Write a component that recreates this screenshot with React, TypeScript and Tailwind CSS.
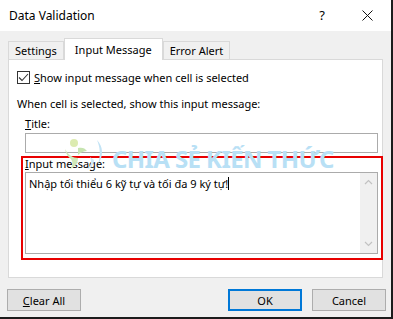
import React from "react";

const font = { fontFamily: '"Noto Sans", "Liberation Sans", sans-serif' };

const Tab = ({ label, active }: { label: string; active?: boolean }) =>
  active ? (
    <div className="relative z-10 -mb-px flex h-[22px] items-center border border-b-0 border-[#d9d9d9] bg-white px-[10px]">
      {label}
    </div>
  ) : (
    <div className="flex h-[18px] items-center border border-b-0 border-[#d9d9d9] bg-[#f0f0f0] px-[6px]">
      {label}
    </div>
  );

const Btn = ({ children, primary }: { children: React.ReactNode; primary?: boolean }) => (
  <div
    className={
      "flex h-[22px] w-[74px] items-center justify-center bg-[#e1e1e1] " +
      (primary ? "border-2 border-[#0078d7]" : "border border-[#adadad]")
    }
  >
    {children}
  </div>
);

const Watermark = () => (
  <div className="pointer-events-none absolute left-[60px] top-[137px] flex items-center gap-[6px]">
    <svg width="46" height="36" viewBox="0 0 46 36">
      <circle cx="14" cy="6" r="4" fill="#dcebb0" />
      <path d="M5 12c3 6 8 9 13 9 0 5-3 9-8 11 3-4 3-7 1-10-3-2-5-5-6-10z" fill="#cfe8b8" />
      <path d="M18 11c4-1 7 0 9 3-3 0-6 1-9 4z" fill="#c6e4b0" />
      <path d="M37 3c6 6 7 16 1 24 3-9 2-17-1-24z" fill="#c2e3f5" />
      <path d="M30 20c2 4 1 9-3 13 4-2 7-6 7-10z" fill="#d0eaf8" />
    </svg>
    <span className="mt-[8px] whitespace-nowrap text-[24px] font-bold leading-none tracking-[-0.6px] text-[#b8e0f5]">
      CHIA SẺ KIẾN THỨC
    </span>
  </div>
);

export default function App() {
  return (
    <div
      style={font}
      className="relative flex h-[319px] w-[393px] flex-col border-b-2 border-r-2 border-[#1c1c1c] bg-[#f0f0f0] text-[11px] leading-[15px] text-black"
    >
      {/* title bar */}
      <div className="flex h-[31px] items-center bg-white pl-[9px] pr-[16px] text-[12px]">
        <span>Data Validation</span>
        <span className="ml-auto mr-[37px] text-[13px]">?</span>
        <svg width="11" height="11" viewBox="0 0 11 11" className="mr-[2px]">
          <path d="M0.5 0.5L10.5 10.5M10.5 0.5L0.5 10.5" stroke="#111" strokeWidth="1" />
        </svg>
      </div>

      {/* tabs */}
      <div className="flex h-[28px] items-end pl-[8px]">
        <Tab label="Settings" />
        <Tab label="Input Message" active />
        <Tab label="Error Alert" />
      </div>

      {/* panel */}
      <div className="mx-[8px] h-[219px] border border-[#d9d9d9] bg-white px-[8px]">
        <div className="mt-[11px] flex h-[13px] items-center gap-[4px]">
          <div className="flex h-[13px] w-[13px] items-center justify-center border border-[#333]">
            <svg width="11" height="9" viewBox="0 0 11 9">
              <path d="M1 4.5L4 7.5L10 1" fill="none" stroke="#333" strokeWidth="1.1" />
            </svg>
          </div>
          <span>
            <span className="underline">S</span>how input message when cell is selected
          </span>
        </div>

        <div className="mt-[12px]">When cell is selected, show this input message:</div>

        <div className="ml-[8px] mt-[5px]">
          <span className="underline">T</span>itle:
        </div>
        <div className="ml-[8px] mt-[2px] h-[20px] w-[353px] border border-[#ababab] bg-white" />

        <div className="ml-[4px] mt-[3px] h-[104px] w-[362px] border-2 border-[#e80000] pl-[2px]">
          <div className="leading-[12px]">
            <span className="underline">I</span>nput message:
          </div>
          <div className="mt-[2px] flex h-[82px] w-[353px] border border-[#ababab] bg-white">
            <div className="flex-1 pl-[3px] pt-[2px]">
              Nhập tối thiểu 6 kỹ tự và tối đa 9 ký tự!
              <span className="inline-block h-[13px] w-px translate-y-[2px] bg-black" />
            </div>
            <div className="flex w-[17px] flex-col items-center justify-between bg-[#f0f0f0] py-[6px]">
              <svg width="9" height="6" viewBox="0 0 9 6">
                <path d="M1 5L4.5 1.5L8 5" fill="none" stroke="#c2c2c2" strokeWidth="1.2" />
              </svg>
              <svg width="9" height="6" viewBox="0 0 9 6">
                <path d="M1 1L4.5 4.5L8 1" fill="none" stroke="#c2c2c2" strokeWidth="1.2" />
              </svg>
            </div>
          </div>
        </div>
      </div>

      {/* buttons */}
      <div className="mt-[11px] flex pl-[7px] pr-[5px]">
        <Btn>
          <span>
            <span className="underline">C</span>lear All
          </span>
        </Btn>
        <div className="ml-auto flex gap-[10px]">
          <Btn primary>OK</Btn>
          <Btn>Cancel</Btn>
        </div>
      </div>

      <Watermark />
    </div>
  );
}
